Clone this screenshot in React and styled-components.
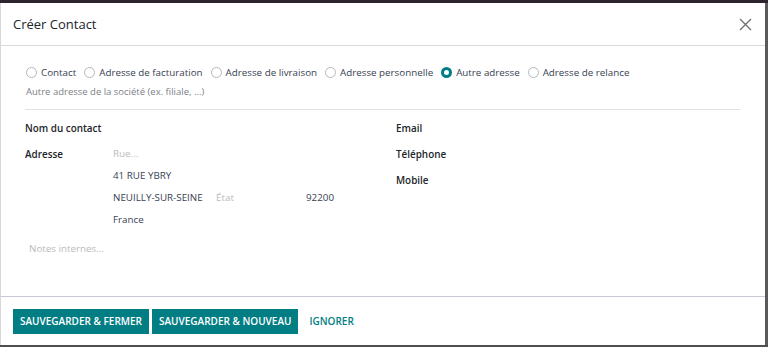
import React from "react";
import styled, { createGlobalStyle } from "styled-components";

const Global = createGlobalStyle`
  html, body { margin: 0; padding: 0; }
  body {
    background: #4f4f4f;
    font-family: "Open Sans", "Noto Sans", sans-serif;
    width: 768px;
    height: 347px;
    overflow: hidden;
  }
`;

const Page = styled.div`
  display: flex;
  flex-direction: column;
  width: 768px;
  height: 347px;
`;

const TopStrip = styled.div`
  height: 3px;
  background: #2d2430;
  flex: none;
`;

const Stage = styled.div`
  display: flex;
  height: 342px;
  flex: none;
`;

const Side = styled.div`
  width: 3px;
  background: #5a5a5a;
`;

const Modal = styled.div`
  width: 765px;
  height: 342px;
  background: #fff;
  display: flex;
  flex-direction: column;
  border-left: 1px solid #d8d8d8;
  box-sizing: border-box;
`;

const Header = styled.div`
  height: 43px;
  box-sizing: border-box;
  border-bottom: 1px solid #d8dadd;
  display: flex;
  align-items: center;
  justify-content: space-between;
  padding: 0 12px 0 12px;
  flex: none;
`;

const Title = styled.h4`
  margin: 0;
  font-size: 13px;
  font-weight: 400;
  color: #212529;
`;

const Close = styled.button`
  border: 0;
  background: none;
  padding: 0;
  width: 16px;
  height: 16px;
  display: flex;
  align-items: center;
  justify-content: center;
  cursor: pointer;
`;

const Body = styled.div`
  flex: 1;
  padding: 16px 24px 0 24px;
  box-sizing: border-box;
`;

const RadioRow = styled.div`
  display: flex;
  align-items: center;
  height: 20px;
  gap: 8px;
  padding-left: 1px;
`;

const RadioItem = styled.label`
  display: flex;
  align-items: center;
  gap: 4px;
  font-size: 9.8px;
  color: #374151;
  white-space: nowrap;
`;

const Dot = styled.span`
  width: 11px;
  height: 11px;
  border-radius: 50%;
  box-sizing: border-box;
  border: ${(p) => (p.$on ? "3px solid #017e84" : "1px solid #b5b8bc")};
  background: #fff;
  flex: none;
`;

const Hint = styled.div`
  font-size: 9.5px;
  color: #7b8086;
  height: 20px;
  line-height: 20px;
  margin-left: 1px;
`;

const Rule = styled.hr`
  border: 0;
  border-top: 1px solid #dee2e6;
  margin: 7px 0 0 0;
  width: 715px;
`;

const Columns = styled.div`
  display: grid;
  grid-template-columns: 371px 1fr;
  padding-top: 9px;
`;

const Col = styled.div`
  display: flex;
  flex-direction: column;
`;

const FieldRow = styled.div`
  display: flex;
  align-items: flex-start;
  min-height: ${(p) => p.$h || 26}px;
`;

const Label = styled.div`
  width: 88px;
  flex: none;
  font-size: 9.9px;
  font-weight: 600;
  color: #212529;
  line-height: 18px;
`;

const WideLabel = styled(Label)`
  width: auto;
`;

const AddrStack = styled.div`
  display: flex;
  flex-direction: column;
`;

const AddrLine = styled.div`
  display: flex;
  height: ${(p) => p.$h || 22}px;
  font-size: 9.8px;
  line-height: 18px;
  color: ${(p) => (p.$ph ? "#b9bcc0" : "#374151")};
`;

const Cell = styled.span`
  width: ${(p) => p.$w}px;
  color: ${(p) => (p.$ph ? "#b9bcc0" : "#374151")};
  flex: none;
`;

const Notes = styled.div`
  font-size: 9.8px;
  color: #b9bcc0;
  margin: 9px 0 0 4px;
`;

const Footer = styled.div`
  height: 49px;
  box-sizing: border-box;
  border-top: 1px solid #c6cad3;
  display: flex;
  align-items: center;
  padding: 0 12px;
  gap: 3px;
  flex: none;
`;

const Btn = styled.button`
  height: 25px;
  padding: 0 7px;
  border: 0;
  font-family: inherit;
  font-size: 10px;
  font-weight: 600;
  cursor: pointer;
  background: ${(p) => (p.$primary ? "#017e84" : "transparent")};
  color: ${(p) => (p.$primary ? "#fff" : "#017e84")};
  margin-left: ${(p) => (p.$primary ? 0 : 1)}px;
`;

const radios = [
  ["Contact", false],
  ["Adresse de facturation", false],
  ["Adresse de livraison", false],
  ["Adresse personnelle", false],
  ["Autre adresse", true],
  ["Adresse de relance", false],
];

export default function App() {
  return (
    <>
      <Global />
      <Page>
        <TopStrip />
        <Stage>
          <Modal>
            <Header>
              <Title>Créer Contact</Title>
              <Close aria-label="Fermer">
                <svg width="13" height="13" viewBox="0 0 13 13">
                  <path d="M1 1 L12 12 M12 1 L1 12" stroke="#6b6f74" strokeWidth="1.3" fill="none" />
                </svg>
              </Close>
            </Header>
            <Body>
              <RadioRow>
                {radios.map(([t, on]) => (
                  <RadioItem key={t}>
                    <Dot $on={on} />
                    {t}
                  </RadioItem>
                ))}
              </RadioRow>
              <Hint>Autre adresse de la société (ex. filiale, ...)</Hint>
              <Rule />
              <Columns>
                <Col>
                  <FieldRow>
                    <WideLabel>Nom du contact</WideLabel>
                  </FieldRow>
                  <FieldRow>
                    <Label>Adresse</Label>
                    <AddrStack>
                      <AddrLine $ph>Rue...</AddrLine>
                      <AddrLine>41 RUE YBRY</AddrLine>
                      <AddrLine>
                        <Cell $w={103}>NEUILLY-SUR-SEINE</Cell>
                        <Cell $w={90} $ph>État</Cell>
                        <Cell $w={60}>92200</Cell>
                      </AddrLine>
                      <AddrLine>France</AddrLine>
                    </AddrStack>
                  </FieldRow>
                  <Notes>Notes internes...</Notes>
                </Col>
                <Col>
                  <FieldRow>
                    <WideLabel>Email</WideLabel>
                  </FieldRow>
                  <FieldRow>
                    <WideLabel>Téléphone</WideLabel>
                  </FieldRow>
                  <FieldRow>
                    <WideLabel>Mobile</WideLabel>
                  </FieldRow>
                </Col>
              </Columns>
            </Body>
            <Footer>
              <Btn $primary>SAUVEGARDER &amp; FERMER</Btn>
              <Btn $primary>SAUVEGARDER &amp; NOUVEAU</Btn>
              <Btn>IGNORER</Btn>
            </Footer>
          </Modal>
          <Side />
        </Stage>
      </Page>
    </>
  );
}
